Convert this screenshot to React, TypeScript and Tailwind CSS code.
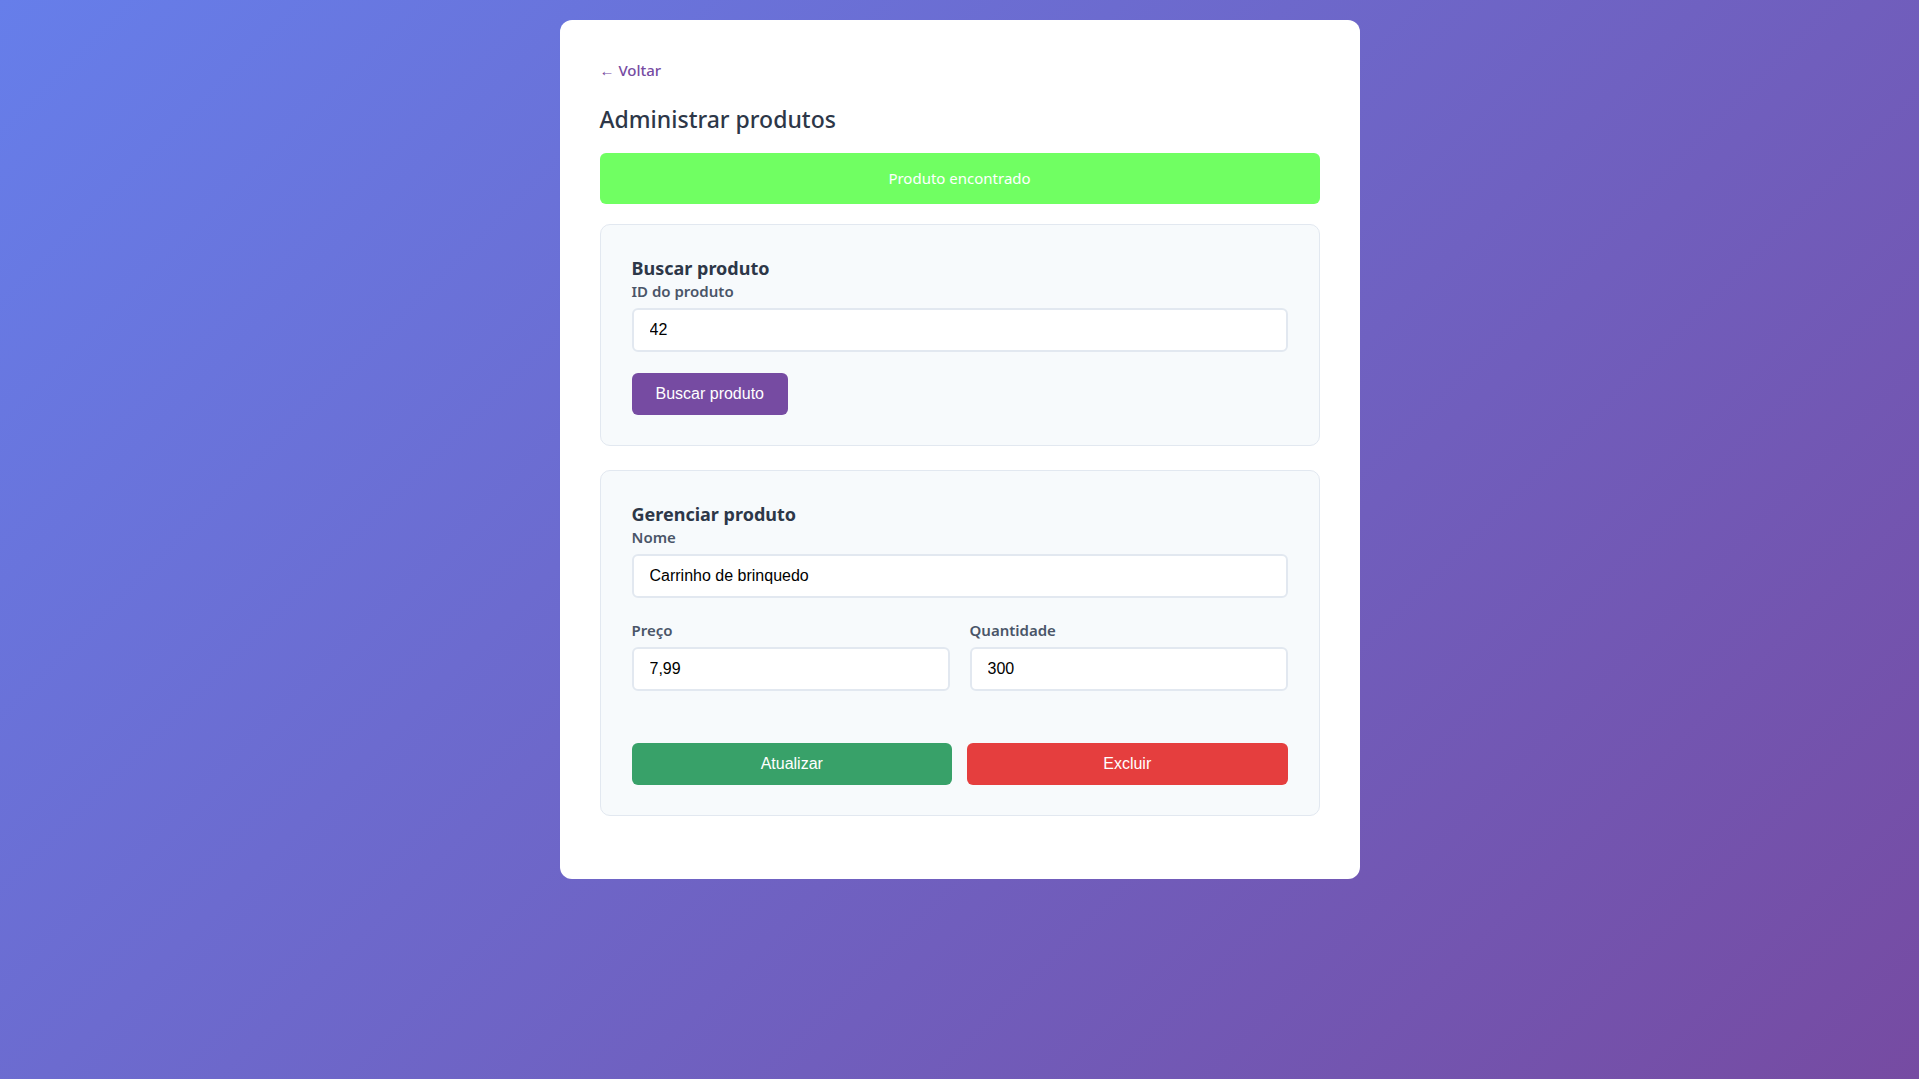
import { useState } from "react";

const ui = { fontFamily: '"Noto Sans", "Open Sans", sans-serif' };
const arial = { fontFamily: '"Liberation Sans", Arial, sans-serif' };

function Label({ children }: { children: string }) {
  return (
    <label
      className="mb-[7px] block text-[15px] leading-[20px] font-semibold text-[#4a5568]"
      style={ui}
    >
      {children}
    </label>
  );
}

function Input({
  value,
  onChange,
}: {
  value: string;
  onChange: (v: string) => void;
}) {
  return (
    <input
      value={value}
      onChange={(e) => onChange(e.target.value)}
      className="block h-[44px] w-full rounded-[6px] border-2 border-[#e2e8f0] bg-white px-[16px] text-[16px] text-black outline-none"
      style={arial}
    />
  );
}

export default function App() {
  const [id, setId] = useState("42");
  const [nome, setNome] = useState("Carrinho de brinquedo");
  const [preco, setPreco] = useState("7,99");
  const [qtd, setQtd] = useState("300");

  return (
    <div className="min-h-screen bg-[linear-gradient(135deg,#667eea_0%,#764ba2_100%)] pt-5 pb-10" style={ui}>
      <div className="mx-auto w-[800px] rounded-[12px] bg-white p-10">
        <a href="#" className="block text-[15px] leading-[21px] font-medium text-[#764ba2]">
          ← Voltar
        </a>
        <h1 className="mt-[24px] mb-[19px] text-[23px] leading-[29px] font-medium text-[#2d3748]">
          Administrar produtos
        </h1>

        <div className="mb-[20px] flex h-[51px] items-center justify-center rounded-[6px] bg-[#70ff62] text-[15px] text-white">
          Produto encontrado
        </div>

        <section className="mb-6 rounded-[10px] border border-[#e2e8f0] bg-[#f7fafc] px-[31px] py-[30px]">
          <h2 className="text-[18px] leading-[26px] font-bold text-[#2d3748]">Buscar produto</h2>
          <Label>ID do produto</Label>
          <Input value={id} onChange={setId} />
          <button
            type="button"
            className="mt-[21px] h-[42px] rounded-[6px] bg-[#764ba2] px-[24px] text-[16px] text-white"
            style={arial}
          >
            Buscar produto
          </button>
        </section>

        <section className="mb-[23px] rounded-[10px] border border-[#e2e8f0] bg-[#f7fafc] px-[31px] py-[30px]">
          <h2 className="text-[18px] leading-[26px] font-bold text-[#2d3748]">Gerenciar produto</h2>
          <Label>Nome</Label>
          <Input value={nome} onChange={setNome} />
          <div className="mt-[22px] grid grid-cols-2 gap-5">
            <div>
              <Label>Preço</Label>
              <Input value={preco} onChange={setPreco} />
            </div>
            <div>
              <Label>Quantidade</Label>
              <Input value={qtd} onChange={setQtd} />
            </div>
          </div>
          <div className="mt-[52px] grid grid-cols-2 gap-[15px]">
            <button
              type="button"
              className="h-[42px] rounded-[6px] bg-[#38a169] text-[16px] text-white"
              style={arial}
            >
              Atualizar
            </button>
            <button
              type="button"
              className="h-[42px] rounded-[6px] bg-[#e53e3e] text-[16px] text-white"
              style={arial}
            >
              Excluir
            </button>
          </div>
        </section>
      </div>
    </div>
  );
}
